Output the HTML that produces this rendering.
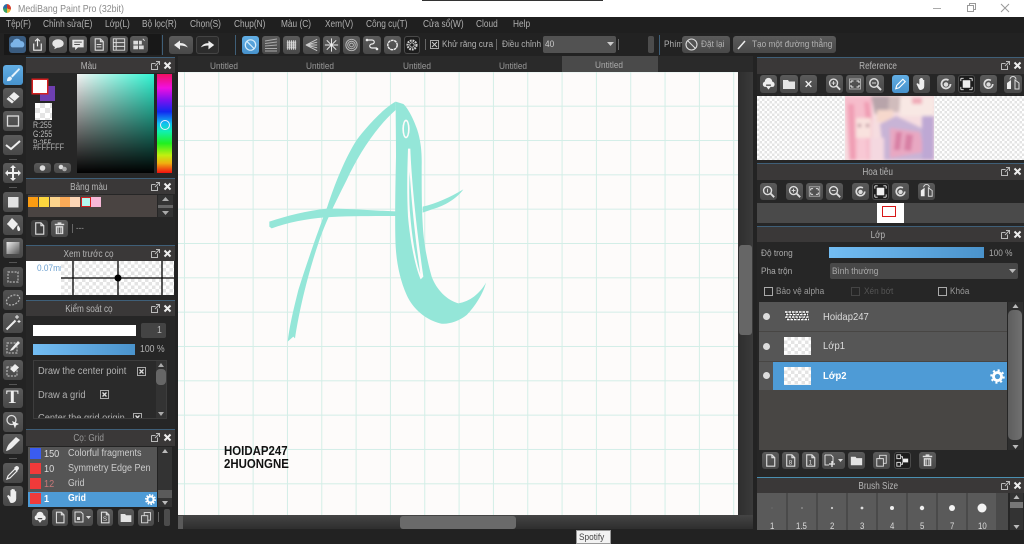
<!DOCTYPE html>
<html><head><meta charset="utf-8"><style>
*{box-sizing:border-box}
html,body{margin:0;padding:0;width:1024px;height:544px;overflow:hidden;background:#232323}
body{font-family:"Liberation Sans","Noto Sans CJK SC",sans-serif;position:relative;font-size:10px;color:#b0b0b0;filter:blur(.3px)}
.a,.t,.b,.p,.l{position:absolute}
.t{white-space:nowrap;line-height:12px;transform:scaleX(.87);transform-origin:0 0}
.b{background:linear-gradient(#5a5a5a,#484848);border-radius:3px}
.b svg{position:absolute;left:0;top:0;width:100%;height:100%}
.k{background:#1c1c1c;box-shadow:inset 0 0 0 1px #4a4a4a}
.on{background:linear-gradient(#62aee4,#4792cc)}
.l{background:#3f5f78;height:1px}
.p{background:#3a3838;text-align:center;line-height:17px;color:#b5b5b5;font-size:10px}
.p span{display:inline-block;transform:scaleX(.82)}
.r{padding-right:25px}
.c{background:repeating-conic-gradient(#e4e4e4 0 25%,#fff 0 50%) 0 0/7px 7px}
.m{top:19px;transform:scaleX(.83)}
.sw{position:absolute;top:197px;width:10px;height:10px}
</style></head><body>
<svg width="0" height="0" style="position:absolute"><defs>
<symbol id="page" viewBox="0 0 18 18"><path d="M5 3h5.500l3 3v9H5zM10.500 3v3h3" fill="none" stroke="#ddd" stroke-width="1.200"/></symbol>
<symbol id="trash" viewBox="0 0 18 18"><path d="M4 4h10v1.500H4zM7 2.500h4V4H7zM5 6.500h8V15H5z" fill="#ddd"/><path d="M7.300 8v6M9 8v6M10.700 8v6" stroke="#555"/></symbol>
<symbol id="folder" viewBox="0 0 18 18"><path d="M3 5h5l1 1.500h6V14H3z" fill="#e4e4e4"/></symbol>
<symbol id="cloud" viewBox="0 0 18 18"><path d="M3 9.500a3 3 0 0 1 2-3 4 4 0 0 1 8 0 3 3 0 0 1 1 5.500h-2.500V9.500h-5V12H5a3 3 0 0 1-2-2.500zM9 15l-3-4h6z" fill="#eee"/></symbol>
<symbol id="zin" viewBox="0 0 18 18"><circle cx="8" cy="8" r="4.200" fill="none" stroke="#ddd" stroke-width="1.500"/><path d="M11 11l4 4" stroke="#ddd" stroke-width="2"/><path d="M6 8h4M8 6v4" stroke="#ddd"/></symbol>
<symbol id="zout" viewBox="0 0 18 18"><circle cx="8" cy="8" r="4.200" fill="none" stroke="#ddd" stroke-width="1.500"/><path d="M11 11l4 4" stroke="#ddd" stroke-width="2"/><path d="M6 8h4" stroke="#ddd"/></symbol>
<symbol id="z1" viewBox="0 0 18 18"><circle cx="8" cy="8" r="4.200" fill="none" stroke="#ddd" stroke-width="1.500"/><path d="M11 11l4 4" stroke="#ddd" stroke-width="2"/><path d="M8 6v4" stroke="#ddd"/></symbol>
<symbol id="fit" viewBox="0 0 18 18"><rect x="3.500" y="4" width="11" height="10" fill="none" stroke="#aaa"/><path d="M5 6h2.500M5 6v2M13 6h-2.500M13 6v2M5 12h2.500M5 12v-2M13 12h-2.500M13 12v-2" stroke="#eee"/></symbol>
<symbol id="pen" viewBox="0 0 18 18"><path d="M4 14l1-3.500 6.500-6.500 2.500 2.500L7.500 13z" fill="none" stroke="#fff" stroke-width="1.200"/></symbol>
<symbol id="hand" viewBox="0 0 18 18"><path d="M4 9l1-.500 2 2V4h1v4.500-5.500h1.200v5.500V3.500h1.200V9V5h1.200v6.500c0 2-1.500 3.500-3.500 3.500S6.500 14 5.500 12z" fill="#eee" stroke="#eee" stroke-width=".6"/></symbol>
<symbol id="rl" viewBox="0 0 18 18"><path d="M13.500 9a4.500 4.500 0 1 1-2-3.800" fill="none" stroke="#ddd" stroke-width="1.800"/><circle cx="9" cy="9.500" r="2.300" fill="#ddd"/></symbol>
<symbol id="ctr" viewBox="0 0 18 18"><path d="M5 5h8v8H5z" fill="#eee"/><path d="M3 3h3M3 3v3M15 3h-3M15 3v3M3 15h3M3 15v-3M15 15h-3M15 15v-3" stroke="#eee"/></symbol>
<symbol id="flip" viewBox="0 0 18 18"><path d="M3 8l4-3v9H3z" fill="#eee"/><path d="M11 5l4 3v6h-4zM6 4.500a3 3 0 0 1 6 0" fill="none" stroke="#ddd"/></symbol>
<symbol id="hd" viewBox="0 0 24 11"><path d="M1.500 3.500h4M1.500 3.500v6h6v-4M5 6l4-4M6 1.500h3.500V5" fill="none" stroke="#bbb"/><path d="M14.500 2.500l6 6M20.500 2.500l-6 6" stroke="#eee" stroke-width="2"/></symbol>
</defs></svg>

<!-- title bar -->
<div class="a" style="left:0;top:0;width:1024px;height:17px;background:#fff"></div>
<div class="a" style="left:422px;top:0;width:181px;height:1px;background:#333"></div>
<div class="a" style="left:3px;top:4px;width:8px;height:9px;border-radius:50%;background:conic-gradient(#d23c2c 0 30%,#e8b83c 0 50%,#38a060 0 75%,#2c6ea8 0)"></div>
<div class="t" style="left:18px;top:3px;color:#8a8a8a;font-size:10.500px;transform:scaleX(.84)">MediBang Paint Pro (32bit)</div>
<svg class="a" style="left:930px;top:1px" width="90" height="13"><path d="M3 7.500h8" stroke="#aaa"/><path d="M37.500 4.500h6v6h-6zM39.500 4.500v-2h6v6h-2" fill="none" stroke="#999"/><path d="M71 3l8 8M79 3l-8 8" stroke="#999"/></svg>

<!-- menu -->
<div class="a" style="left:0;top:17px;width:1024px;height:16px;background:#1f1f1f"></div>
<div class="t m" style="left:6px">Tệp(F)</div><div class="t m" style="left:43px">Chỉnh sửa(E)</div><div class="t m" style="left:105px">Lớp(L)</div><div class="t m" style="left:142px">Bộ lọc(R)</div><div class="t m" style="left:190px">Chọn(S)</div><div class="t m" style="left:234px">Chụp(N)</div><div class="t m" style="left:281px">Màu (C)</div><div class="t m" style="left:325px">Xem(V)</div><div class="t m" style="left:366px">Công cụ(T)</div><div class="t m" style="left:423px">Cửa sổ(W)</div><div class="t m" style="left:476px">Cloud</div><div class="t m" style="left:513px">Help</div>

<!-- toolbar -->
<div class="a" style="left:0;top:33px;width:1024px;height:23px;background:#222"></div>
<div class="a" style="left:4px;top:34px;width:157px;height:21px;background:#181818"></div>
<div class="a" style="left:162px;top:35px;width:1px;height:20px;background:#3f5f78"></div>
<div class="a" style="left:235px;top:35px;width:1px;height:20px;background:#3f5f78"></div>
<div class="a" style="left:659px;top:35px;width:1px;height:20px;background:#3f5f78"></div>
<div class="b" style="left:9px;top:36px;width:17px;height:17px;background:#3a5c80"><svg viewBox="0 0 18 18"><path d="M3 12a3 3 0 0 1 1-5.500 4.500 4.500 0 0 1 8.500-1A3.500 3.500 0 0 1 14.500 12z" fill="#7cb4e8"/></svg></div>
<div class="b" style="left:29px;top:36px;width:17px;height:17px"><svg viewBox="0 0 18 18"><path d="M5 8v7h8V8M9 11V3M6.500 5.500L9 3l2.500 2.500" fill="none" stroke="#eee" stroke-width="1.200"/></svg></div>
<div class="b" style="left:49px;top:36px;width:18px;height:17px"><svg viewBox="0 0 18 18"><ellipse cx="9" cy="8" rx="6" ry="4.500" fill="#e8e8e8"/><path d="M6 11l-1 3 4-2z" fill="#e8e8e8"/></svg></div>
<div class="b" style="left:69px;top:36px;width:18px;height:17px"><svg viewBox="0 0 18 18"><path d="M3 4h12v8H9l-3 3v-3H3z" fill="#e8e8e8"/><path d="M5 6.500h8M5 9h6" stroke="#555"/></svg></div>
<div class="b" style="left:90px;top:36px;width:18px;height:17px"><svg viewBox="0 0 18 18"><use href="#page"/><path d="M6.500 9h5M6.500 11.500h5" stroke="#ddd"/></svg></div>
<div class="b" style="left:110px;top:36px;width:18px;height:17px"><svg viewBox="0 0 18 18"><path d="M3 3h12v12H3zM3 7h12M3 11h12M6 3v12" fill="none" stroke="#ddd"/></svg></div>
<div class="b" style="left:130px;top:36px;width:18px;height:17px"><svg viewBox="0 0 18 18"><path d="M3 5h5v4H3zM9 5h3v4H9zM3 10h5v4H3zM9 10h5v4H9z" fill="#ddd"/><path d="M13 3l2 2" stroke="#ddd"/></svg></div>
<div class="b" style="left:169px;top:36px;width:24px;height:18px"><svg viewBox="0 0 24 18"><path d="M5 9l6-4.500v2.500c4 0 6 1.500 8 4.500-3-1.500-5-2-8-2v4z" fill="#eee"/></svg></div>
<div class="b" style="left:196px;top:36px;width:23px;height:18px;background:#2c2c2c;box-shadow:inset 0 0 0 1px #444"><svg viewBox="0 0 24 18"><path d="M19 9l-6-4.500v2.500c-4 0-6 1.500-8 4.500 3-1.500 5-2 8-2v4z" fill="#eee"/></svg></div>
<div class="b on" style="left:242px;top:36px;width:17px;height:18px"><svg viewBox="0 0 18 18"><circle cx="9" cy="9" r="5.500" fill="none" stroke="#d6ecfa" stroke-width="1.300"/><path d="M5 5l8 8" stroke="#d6ecfa" stroke-width="1.300"/></svg></div>
<div class="b" style="left:262px;top:36px;width:18px;height:18px"><svg viewBox="0 0 18 18"><path d="M3 5l12-2M3 7.500l12-1.500M3 10l12-1M3 12.500h12M3 15l12 0" stroke="#aaa"/></svg></div>
<div class="b" style="left:283px;top:36px;width:17px;height:18px"><svg viewBox="0 0 18 18"><path d="M5 4v10M7 4v10M9 4v10M11 4v10M13 4v10M4 6h10M4 8h10M4 10h10M4 12h10" stroke="#ddd"/></svg></div>
<div class="b" style="left:303px;top:36px;width:17px;height:18px"><svg viewBox="0 0 18 18"><path d="M3 9l12-6M3 9l12-3M3 9h12M3 9l12 3M3 9l12 6" stroke="#ccc"/></svg></div>
<div class="b" style="left:323px;top:36px;width:17px;height:18px"><svg viewBox="0 0 18 18"><path d="M9 2v14M2 9h14M4 4l10 10M14 4L4 14" stroke="#eee"/></svg></div>
<div class="b" style="left:343px;top:36px;width:17px;height:18px"><svg viewBox="0 0 18 18"><circle cx="9" cy="9" r="6" fill="none" stroke="#bbb"/><circle cx="9" cy="9" r="4" fill="none" stroke="#bbb"/><circle cx="9" cy="9" r="2" fill="none" stroke="#bbb"/></svg></div>
<div class="b" style="left:363px;top:36px;width:18px;height:18px"><svg viewBox="0 0 18 18"><path d="M4 4h5c3 0 3 4 0 4S6 12 9 12h5" fill="none" stroke="#eee" stroke-width="1.200"/><circle cx="4" cy="4" r="1.300" fill="#eee"/><circle cx="14" cy="13" r="1.300" fill="#eee"/></svg></div>
<div class="b" style="left:384px;top:36px;width:17px;height:18px"><svg viewBox="0 0 18 18"><circle cx="9" cy="9" r="5" fill="none" stroke="#eee" stroke-width="1.500" stroke-dasharray="3 .6"/></svg></div>
<div class="b k" style="left:404px;top:36px;width:16px;height:18px"><svg viewBox="0 0 18 18"><circle cx="9" cy="9" r="5" fill="none" stroke="#ccc" stroke-width="2.500" stroke-dasharray="2 1"/><circle cx="9" cy="9" r="2.500" fill="none" stroke="#ccc"/></svg></div>
<div class="a" style="left:425px;top:39px;width:1px;height:11px;background:#666"></div>
<div class="a" style="left:430px;top:40px;width:9px;height:9px;border:1px solid #aaa;color:#ccc"><svg width="7" height="7" style="position:absolute;left:0;top:0"><path d="M1 1l5 5M6 1L1 6" stroke="#ccc"/></svg></div>
<div class="t" style="left:442px;top:39px;font-size:9.500px">Khử răng cưa</div>
<div class="a" style="left:496px;top:39px;width:1px;height:11px;background:#666"></div>
<div class="t" style="left:502px;top:39px;font-size:9.500px">Điều chỉnh</div>
<div class="a" style="left:543px;top:36px;width:73px;height:17px;background:#525252;border-radius:2px"></div>
<div class="t" style="left:545px;top:39px;font-size:9.500px;color:#ccc">40</div>
<svg class="a" style="left:607px;top:42px" width="7" height="5"><path d="M0 0h7L3.500 4z" fill="#ccc"/></svg>
<div class="a" style="left:618px;top:39px;width:1px;height:11px;background:#666"></div>
<div class="a" style="left:648px;top:36px;width:6px;height:17px;background:#4c4c4c;border-radius:2px"></div>
<div class="t" style="left:664px;top:39px;font-size:9.500px">Phím</div>
<div class="b" style="left:682px;top:36px;width:48px;height:17px"><svg style="width:17px" viewBox="0 0 17 17"><circle cx="9.500" cy="8.500" r="5.500" fill="none" stroke="#ddd" stroke-width="1.100"/><path d="M5.500 4.500l8 8" stroke="#ddd" stroke-width="1.100"/></svg></div>
<div class="t" style="left:701px;top:39px;font-size:9.500px">Đặt lại</div>
<div class="b" style="left:733px;top:36px;width:103px;height:17px"><svg style="width:17px" viewBox="0 0 17 17"><path d="M5 13L12 5" stroke="#eee" stroke-width="1.500"/></svg></div>
<div class="t" style="left:752px;top:39px;font-size:9.500px">Tạo một đường thẳng</div>

<!-- tool column -->
<div class="a" style="left:0;top:56px;width:26px;height:474px;background:#232323"></div>
<div class="b on" style="left:3px;top:65px;width:20px;height:20px"><svg viewBox="0 0 20 20"><path d="M16 3L8 11l1.500 1.500L17 4.500zM4 16c0-3 1.500-4.500 3.500-4.500l1.500 1.500C9 15 7 16.500 4 16z" fill="#e8f4fc"/></svg></div>
<div class="b" style="left:3px;top:88px;width:20px;height:20px"><svg viewBox="0 0 20 20"><path d="M3.500 11L11 4l5.500 4.500L9 15.500z" fill="#eee"/><path d="M6 9l5.500 4.500" stroke="#666"/></svg></div>
<div class="b" style="left:3px;top:111px;width:20px;height:20px"><svg viewBox="0 0 20 20"><rect x="4.500" y="5" width="11" height="10" fill="none" stroke="#ddd" stroke-width="1.300"/></svg></div>
<div class="b" style="left:3px;top:135px;width:20px;height:20px"><svg viewBox="0 0 20 20"><path d="M3 10l5 4 9-8" fill="none" stroke="#eee" stroke-width="2"/></svg></div>
<div class="a" style="left:9px;top:159px;width:8px;height:1px;background:#555"></div>
<div class="b" style="left:3px;top:163px;width:20px;height:20px"><svg viewBox="0 0 20 20"><path d="M10 2l3 3h-2v4h4V7l3 3-3 3v-2h-4v4h2l-3 3-3-3h2v-4H5v2l-3-3 3-3v2h4V5H7z" fill="#eee"/></svg></div>
<div class="a" style="left:9px;top:187px;width:8px;height:1px;background:#555"></div>
<div class="b" style="left:3px;top:192px;width:20px;height:20px"><svg viewBox="0 0 20 20"><rect x="5" y="5" width="10.500" height="10.500" fill="#e2e2e2"/></svg></div>
<div class="b" style="left:3px;top:215px;width:20px;height:20px"><svg viewBox="0 0 20 20"><path d="M9 3l6 6-5 6-6-6z" fill="#eee"/><path d="M15 11c2 2 2 4 1 4.500s-2-2-1-4.500zM4 9h9" stroke="#eee" fill="#eee"/></svg></div>
<div class="b" style="left:3px;top:238px;width:20px;height:20px"><svg viewBox="0 0 20 20"><defs><linearGradient id="gr" x1="0" y1="0" x2="1" y2="1"><stop offset="0" stop-color="#eee"/><stop offset="1" stop-color="#555"/></linearGradient></defs><rect x="3.500" y="4" width="13" height="12" fill="url(#gr)"/></svg></div>
<div class="a" style="left:9px;top:262px;width:8px;height:1px;background:#555"></div>
<div class="b" style="left:3px;top:267px;width:20px;height:20px;opacity:.85"><svg viewBox="0 0 20 20"><rect x="5" y="5" width="10" height="10" fill="none" stroke="#ccc" stroke-width="1.200" stroke-dasharray="2 1.300"/></svg></div>
<div class="b" style="left:3px;top:290px;width:20px;height:20px;opacity:.85"><svg viewBox="0 0 20 20"><ellipse cx="10" cy="10" rx="7" ry="4.500" transform="rotate(-25 10 10)" fill="none" stroke="#ccc" stroke-width="1.200" stroke-dasharray="2 1.300"/></svg></div>
<div class="b" style="left:3px;top:313px;width:20px;height:20px"><svg viewBox="0 0 20 20"><path d="M3.500 16.500l9-9" stroke="#eee" stroke-width="2"/><path d="M14 2v4M12 4h4M16 7v3M14.500 8.500h3" stroke="#eee"/></svg></div>
<div class="b" style="left:3px;top:337px;width:20px;height:20px"><svg viewBox="0 0 20 20"><rect x="4" y="6" width="10" height="10" fill="none" stroke="#ccc" stroke-dasharray="2 1.300"/><path d="M8 12l7-8 2 2-7 7-3 1z" fill="#eee"/></svg></div>
<div class="b" style="left:3px;top:360px;width:20px;height:20px"><svg viewBox="0 0 20 20"><rect x="4" y="7" width="10" height="9" fill="none" stroke="#ccc" stroke-dasharray="2 1.300"/><path d="M7 9l5-5 4 3.500-5 5z" fill="#eee"/></svg></div>
<div class="a" style="left:9px;top:384px;width:8px;height:1px;background:#555"></div>
<div class="b" style="left:3px;top:388px;width:20px;height:20px"><span class="a" style="left:3px;top:0;font:bold 19px/20px 'Liberation Serif',serif;color:#eee">T</span></div>
<div class="b" style="left:3px;top:412px;width:20px;height:20px"><svg viewBox="0 0 20 20"><circle cx="8.500" cy="8" r="4.500" fill="none" stroke="#ddd" stroke-width="1.300"/><path d="M9 9l7 3-3 1.500-1 3z" fill="#eee"/></svg></div>
<div class="b" style="left:3px;top:434px;width:20px;height:20px"><svg viewBox="0 0 20 20"><path d="M3 17c1-4 2-6 4-8l6-6 4 3-6 6c-2 2-4 4-8 5z" fill="#eee"/></svg></div>
<div class="a" style="left:9px;top:458px;width:8px;height:1px;background:#555"></div>
<div class="b" style="left:3px;top:463px;width:20px;height:20px"><svg viewBox="0 0 20 20"><path d="M4 16l1-3 7-7 2 2-7 7z" fill="none" stroke="#eee" stroke-width="1.200"/><path d="M11 5l1.500-1.500c2-1.500 4.500 1 3 3L14 8z" fill="#eee"/></svg></div>
<div class="b" style="left:3px;top:486px;width:20px;height:20px"><svg viewBox="0 0 18 18"><use href="#hand"/></svg></div>

<!-- colour panel -->
<div class="a" style="left:26px;top:57px;width:149px;height:373px;background:#262626"></div>
<div class="l" style="left:26px;top:57px;width:149px"></div>
<div class="p" style="left:26px;top:58px;width:149px;height:15px;padding-right:24px"><span>Màu</span></div>
<svg class="a" style="left:150px;top:60px" width="24" height="11"><use href="#hd"/></svg>
<div class="a" style="left:40px;top:86px;width:15px;height:15px;background:#6e3fb0"></div>
<div class="a" style="left:32px;top:79px;width:16px;height:15px;background:#fff;border:1px solid #d42020;box-shadow:0 0 0 .5px #d42020"></div>
<div class="a c" style="left:35px;top:103px;width:17px;height:17px;background-size:10px 10px"></div>
<div class="t" style="left:33px;top:121px;font-size:9px;color:#bbb;line-height:9px;transform:scaleX(.78)">R:255<br>G:255</div>
<div class="a" style="left:33px;top:139px;width:40px;height:3.500px;overflow:hidden"><div class="t" style="top:0;left:0;font-size:9px;line-height:9px;color:#bbb;transform:scaleX(.78)">B:255</div></div>
<div class="t" style="left:33px;top:143px;font-size:9px;line-height:9px;transform:scaleX(.82)">#FFFFFF</div>
<div class="b" style="left:34px;top:163px;width:17px;height:10px"><svg viewBox="0 0 17 10"><circle cx="8.500" cy="5" r="2.800" fill="#ddd"/></svg></div>
<div class="b" style="left:54px;top:163px;width:17px;height:10px"><svg viewBox="0 0 17 10"><circle cx="7" cy="4" r="2.300" fill="#ddd"/><circle cx="10.500" cy="6" r="2.300" fill="#aaa"/></svg></div>
<div class="a" style="left:77px;top:74px;width:77px;height:99px;background:linear-gradient(to top,#000,rgba(0,0,0,0)),linear-gradient(to right,#f4f4f4,#30f5d2)"></div>
<div class="a" style="left:157px;top:74px;width:15px;height:99px;background:linear-gradient(#f01060 0,#f010e0 14%,#8010f0 26%,#1028f0 38%,#10c0f0 50%,#10f0b0 58%,#20f020 70%,#c0f010 82%,#f0b010 90%,#f01010 100%)"></div>
<div class="a" style="left:160px;top:120px;width:10px;height:10px;border:1.500px solid #eef;border-radius:50%"></div>

<!-- palette -->
<div class="l" style="left:26px;top:178px;width:149px"></div>
<div class="p" style="left:26px;top:179px;width:149px;height:15px;padding-right:24px"><span>Bảng màu</span></div>
<svg class="a" style="left:150px;top:181px" width="24" height="11"><use href="#hd"/></svg>
<div class="a" style="left:28px;top:195px;width:129px;height:22px;background:#4a4442"></div>
<div class="sw" style="left:28px;background:#fb9c12"></div><div class="sw" style="left:39px;background:#fcd63e"></div><div class="sw" style="left:50px;background:#fcd48c"></div><div class="sw" style="left:60px;background:#fbab58"></div><div class="sw" style="left:70px;background:#fdd6b6"></div>
<div class="sw" style="left:81px;background:#b4f7ee;border:1px solid #d42020"></div><div class="sw" style="left:91px;background:#f7b8d8"></div>
<div class="a" style="left:158px;top:195px;width:15px;height:22px;background:#333"></div>
<svg class="a" style="left:158px;top:197px" width="15" height="20"><path d="M7.500 0l3.500 4H4z" fill="#aaa"/><path d="M0 8h15v3H0z" fill="#666"/><path d="M7.500 18l3.500-4H4z" fill="#aaa"/></svg>
<div class="b" style="left:31px;top:220px;width:17px;height:17px;background:#3e3e3e"><svg viewBox="0 0 18 18"><use href="#page"/></svg></div>
<div class="b" style="left:51px;top:220px;width:17px;height:17px"><svg viewBox="0 0 18 18"><use href="#trash"/></svg></div>
<div class="a" style="left:72px;top:224px;width:1px;height:9px;background:#666"></div>
<div class="t" style="left:76px;top:222px;font-size:9px;color:#999">---</div>

<!-- preview -->
<div class="l" style="left:26px;top:245px;width:149px"></div>
<div class="p" style="left:26px;top:246px;width:149px;height:15px;padding-right:24px"><span>Xem trước cọ</span></div>
<svg class="a" style="left:150px;top:248px" width="24" height="11"><use href="#hd"/></svg>
<div class="a c" style="left:61px;top:261px;width:113px;height:34px"></div>
<div class="a" style="left:26px;top:261px;width:35px;height:34px;background:#fff;overflow:hidden"><div class="t" style="left:11px;top:2px;color:#6a9fd0;font-size:9.500px">0.07mm</div></div>
<svg class="a" style="left:61px;top:261px" width="113" height="34"><path d="M12 0v34M57 0v34M101 0v34M0 17h113" stroke="#000" stroke-width="1.300"/><circle cx="57" cy="17" r="3.500" fill="#000"/></svg>

<!-- brush control -->
<div class="l" style="left:26px;top:300px;width:149px"></div>
<div class="p" style="left:26px;top:301px;width:149px;height:15px;padding-right:24px"><span>Kiểm soát cọ</span></div>
<svg class="a" style="left:150px;top:303px" width="24" height="11"><use href="#hd"/></svg>
<div class="a" style="left:33px;top:325px;width:103px;height:11px;background:#fff"></div>
<div class="a" style="left:141px;top:323px;width:25px;height:15px;background:#444;border-radius:2px"></div>
<div class="t" style="left:157px;top:325px;color:#bbb;font-size:10px">1</div>
<div class="a" style="left:33px;top:344px;width:102px;height:11px;background:linear-gradient(to right,#73bdf3,#4a93cc)"></div>
<div class="t" style="left:140px;top:344px;font-size:10px">100 %</div>
<div class="a" style="left:33px;top:360px;width:134px;height:59px;background:#2a2a2a;border:1px solid #3d3d3d;overflow:hidden">
<div class="t" style="left:4px;top:5px;font-size:10px;transform:scaleX(.93)">Draw the center point</div>
<div class="t" style="left:4px;top:29px;font-size:10px;transform:scaleX(.93)">Draw a grid</div>
<div class="t" style="left:4px;top:52px;font-size:10px;transform:scaleX(.93)">Center the grid origin</div>
<svg class="a" style="left:103px;top:6px" width="9" height="9"><path d="M.5.500h8v8h-8z" fill="none" stroke="#aaa"/><path d="M2.500 2.500l4 4M6.500 2.500l-4 4" stroke="#ddd" stroke-width="1.300"/></svg>
<svg class="a" style="left:66px;top:29px" width="9" height="9"><path d="M.5.500h8v8h-8z" fill="none" stroke="#aaa"/><path d="M2.500 2.500l4 4M6.500 2.500l-4 4" stroke="#ddd" stroke-width="1.300"/></svg>
<svg class="a" style="left:99px;top:52px" width="9" height="9"><path d="M.5.500h8v8h-8z" fill="none" stroke="#aaa"/><path d="M2.500 2.500l4 4M6.500 2.500l-4 4" stroke="#ddd" stroke-width="1.300"/></svg>
</div>
<div class="a" style="left:156px;top:361px;width:10px;height:57px;background:#333"></div>
<div class="a" style="left:156px;top:369px;width:10px;height:16px;background:#666;border-radius:4px"></div>
<svg class="a" style="left:156px;top:362px" width="10" height="55"><path d="M5 1l3 4H2zM5 54l3-4H2z" fill="#aaa"/></svg>

<!-- brush list -->
<div class="l" style="left:26px;top:429px;width:149px"></div>
<div class="p" style="left:26px;top:430px;width:149px;height:16px;padding-right:24px;color:#999"><span>Cọ: Grid</span></div>
<svg class="a" style="left:150px;top:432px" width="24" height="11"><use href="#hd"/></svg>
<div class="a" style="left:28px;top:447px;width:129px;height:14.500px;background:#555"></div>
<div class="a" style="left:28px;top:462px;width:129px;height:14.500px;background:#555"></div>
<div class="a" style="left:28px;top:477px;width:129px;height:14.500px;background:#555"></div>
<div class="a" style="left:28px;top:492px;width:129px;height:14.500px;background:#4e9bd6"></div>
<div class="a" style="left:30px;top:448px;width:11px;height:11px;background:#3a5cf0"></div>
<div class="a" style="left:30px;top:463px;width:11px;height:11px;background:#f03a3a"></div>
<div class="a" style="left:30px;top:478px;width:11px;height:11px;background:#f03a3a"></div>
<div class="a" style="left:30px;top:493px;width:11px;height:11px;background:#f03a3a"></div>
<div class="t" style="left:44px;top:448px;font-size:10.500px;color:#ddd">150</div><div class="t" style="left:68px;top:448px;font-size:10px;color:#ccc;transform:scaleX(.9)">Colorful fragments</div>
<div class="t" style="left:44px;top:463px;font-size:10.500px;color:#ddd">10</div><div class="t" style="left:68px;top:463px;font-size:10px;color:#ccc;transform:scaleX(.9)">Symmetry Edge Pen</div>
<div class="t" style="left:44px;top:478px;font-size:10.500px;color:#c87878">12</div><div class="t" style="left:68px;top:478px;font-size:10px;color:#ccc">Grid</div>
<div class="t" style="left:44px;top:493px;font-size:10.500px;color:#fff;font-weight:bold">1</div><div class="t" style="left:68px;top:493px;font-size:10px;color:#fff;font-weight:bold">Grid</div>
<svg class="a" style="left:145px;top:494px" width="11" height="11"><circle cx="5.500" cy="5.500" r="3" fill="none" stroke="#fff" stroke-width="2"/><circle cx="5.500" cy="5.500" r="4.500" fill="none" stroke="#fff" stroke-width="2" stroke-dasharray="1.500 1.300"/></svg>
<div class="a" style="left:158px;top:447px;width:14px;height:60px;background:#333"></div>
<div class="a" style="left:158px;top:490px;width:14px;height:8px;background:#5a5a5a"></div>
<svg class="a" style="left:158px;top:448px" width="14" height="58"><path d="M7 1l3 4H4zM7 57l3-4H4z" fill="#bbb"/></svg>
<div class="b" style="left:32px;top:509px;width:16px;height:17px"><svg viewBox="0 0 18 18"><use href="#cloud"/></svg></div>
<div class="b" style="left:52px;top:509px;width:16px;height:17px"><svg viewBox="0 0 18 18"><use href="#page"/></svg></div>
<div class="b" style="left:72px;top:509px;width:21px;height:17px"><svg viewBox="0 0 21 17" ><path d="M3 3h6l2 2v8H3z" fill="none" stroke="#ddd"/><path d="M5 8h3v3H5z" fill="#ddd"/><path d="M14 7h5l-2.500 3z" fill="#ddd"/></svg></div>
<div class="b" style="left:97px;top:509px;width:16px;height:17px"><svg viewBox="0 0 18 18"><use href="#page"/><text x="9" y="13" font-size="7" text-anchor="middle" fill="#ddd" font-family="Liberation Sans">S</text></svg></div>
<div class="b" style="left:118px;top:509px;width:16px;height:17px"><svg viewBox="0 0 18 18"><use href="#folder"/></svg></div>
<div class="b" style="left:138px;top:509px;width:16px;height:17px"><svg viewBox="0 0 18 18"><path d="M4 7h7v8H4zM7 7V3.500h7V12h-3" fill="none" stroke="#ddd"/></svg></div>
<div class="a" style="left:158px;top:512px;width:1px;height:10px;background:#666"></div>
<div class="a" style="left:164px;top:509px;width:6px;height:17px;background:#4c4c4c;border-radius:2px"></div>

<!-- tabs -->
<div class="a" style="left:178px;top:56px;width:575px;height:16px;background:#2a2a2a"></div>
<div class="a" style="left:562px;top:56px;width:96px;height:16px;background:#4a4a4a"></div>
<div class="t" style="left:210px;top:61px;font-size:9.500px;color:#999">Untitled</div>
<div class="t" style="left:306px;top:61px;font-size:9.500px;color:#999">Untitled</div>
<div class="t" style="left:403px;top:61px;font-size:9.500px;color:#999">Untitled</div>
<div class="t" style="left:499px;top:61px;font-size:9.500px;color:#999">Untitled</div>
<div class="t" style="left:595px;top:60px;font-size:9.500px;color:#aaa">Untitled</div>

<!-- canvas -->
<div class="a" style="left:178px;top:72px;width:560px;height:443px;background-color:#fdfbfa;background-image:linear-gradient(to right,#d3eee7 1px,transparent 1px),linear-gradient(to bottom,#d3eee7 1px,transparent 1px);background-size:34.330px 34.330px;background-position:40.300px 33.700px"></div>
<svg class="a" style="left:250px;top:90px" width="260" height="260" viewBox="0 0 780 780">
<g fill="#94e6d8">
<path d="M437 35C400 55 350 110 320 150C285 205 255 280 232 350C205 420 170 520 145 600C130 660 118 710 113 755L130 740L135 745C145 680 165 580 205 460C225 400 250 350 290 270C325 195 375 115 437 60Z"/>
<path d="M437 35L460 42C475 55 495 95 505 130C513 160 516 190 515 230C515 290 515 350 518 400C520 445 528 500 545 560C560 600 590 630 625 640C660 635 690 610 708 578C700 610 675 650 650 675C625 695 590 705 570 700C530 690 490 660 470 615C450 570 440 520 437 470C434 400 436 300 438 200C438 150 437 100 437 35Z"/>
<path d="M58 395C110 378 170 362 232 356C290 355 370 362 437 364L437 378C370 378 290 378 225 382C170 386 110 398 65 415L58 410Z"/>
<path d="M518 350C560 340 600 322 640 298C625 320 590 345 555 355L518 368Z"/>
</g>
<ellipse cx="468" cy="117" rx="11" ry="28" fill="#fdfbfa"/>
<ellipse cx="468" cy="117" rx="6" ry="23" fill="#94e6d8"/>
<path d="M474 176L481 176C484 260 497 400 520 560L512 568C495 530 480 450 474 380C470 300 472 240 474 176Z" fill="#fdfbfa"/>
<path d="M479 245C483 320 495 440 511 552C497 510 486 440 481 380C477 340 477 290 479 245Z" fill="#94e6d8"/>
</svg>
<div class="t" style="left:224px;top:444px;color:#111;font-weight:bold;font-size:13px;line-height:13px;transform:scaleX(.88)">HOIDAP247<br>2HUONGNE</div>

<!-- canvas scrollbars -->
<div class="a" style="left:738px;top:72px;width:15px;height:443px;background:linear-gradient(to right,#2e2e2e,#3a3a3a)"></div>
<div class="a" style="left:739px;top:245px;width:13px;height:90px;background:#666;border-radius:3px"></div>
<div class="a" style="left:178px;top:515px;width:575px;height:14px;background:linear-gradient(#444,#2e2e2e)"></div>
<div class="a" style="left:400px;top:516px;width:116px;height:13px;background:#6a6a6a;border-radius:3px"></div>
<div class="a" style="left:178px;top:516px;width:5px;height:13px;background:#5a5a5a"></div>

<!-- right: reference -->
<div class="a" style="left:757px;top:57px;width:267px;height:473px;background:#262626"></div>
<div class="l" style="left:757px;top:57px;width:267px"></div>
<div class="p r" style="left:757px;top:58px;width:267px;height:16px"><span>Reference</span></div>
<svg class="a" style="left:1000px;top:60px" width="24" height="11"><use href="#hd"/></svg>
<div class="b" style="left:760px;top:75px;width:17px;height:18px"><svg viewBox="0 0 18 18"><use href="#cloud"/></svg></div>
<div class="b" style="left:780px;top:75px;width:18px;height:18px"><svg viewBox="0 0 18 18"><use href="#folder"/></svg></div>
<div class="b" style="left:800px;top:75px;width:17px;height:18px"><svg viewBox="0 0 18 18"><path d="M6 6l6 6M12 6l-6 6" stroke="#eee" stroke-width="1.500"/></svg></div>
<div class="b" style="left:826px;top:75px;width:17px;height:18px"><svg viewBox="0 0 18 18"><use href="#zin"/></svg></div>
<div class="b" style="left:846px;top:75px;width:18px;height:18px"><svg viewBox="0 0 18 18"><use href="#fit"/></svg></div>
<div class="b" style="left:866px;top:75px;width:18px;height:18px"><svg viewBox="0 0 18 18"><use href="#zout"/></svg></div>
<div class="b on" style="left:892px;top:75px;width:17px;height:18px"><svg viewBox="0 0 18 18"><use href="#pen"/></svg></div>
<div class="b" style="left:913px;top:75px;width:17px;height:18px"><svg viewBox="0 0 18 18"><use href="#hand"/></svg></div>
<div class="b" style="left:937px;top:75px;width:18px;height:18px"><svg viewBox="0 0 18 18"><use href="#rl"/></svg></div>
<div class="b k" style="left:958px;top:75px;width:17px;height:18px"><svg viewBox="0 0 18 18"><use href="#ctr"/></svg></div>
<div class="b" style="left:980px;top:75px;width:17px;height:18px"><svg viewBox="0 0 18 18"><use href="#rl"/></svg></div>
<div class="b" style="left:1004px;top:75px;width:18px;height:18px"><svg viewBox="0 0 18 18"><use href="#flip"/></svg></div>
<div class="a c" style="left:757px;top:96px;width:267px;height:64px;background-size:5px 5px"></div>
<svg class="a" style="left:844px;top:96px" width="91" height="64" viewBox="0 0 91 64">
<defs><filter id="bl" x="-5%" y="-5%" width="110%" height="110%"><feGaussianBlur stdDeviation="1.500"/></filter></defs>
<clipPath id="cp"><rect x="1" y="0" width="89" height="64"/></clipPath>
<g clip-path="url(#cp)">
<rect width="91" height="64" fill="#f6dde0"/>
<g filter="url(#bl)">
<path d="M0 0h28v64H5z" fill="#f6bccb"/>
<path d="M4 8l6 0 2 56H6zM20 6l5 0 3 20-6 0z" fill="#f09eb4"/>
<path d="M12 22h15v20H12z" fill="#f9e2de"/>
<path d="M14 28h3v3h-3zM22 28h3v3h-3z" fill="#b08090"/>
<path d="M27 0h18v18l-14 0z" fill="#b8a4aa"/>
<path d="M45 0h12l-2 16H44z" fill="#d0bcbc"/>
<path d="M33 14h16v12H33z" fill="#f6d8cc"/>
<path d="M56 2h34v18H56z" fill="#f8e8e4"/>
<path d="M68 2h10v6H68z" fill="#f0aab8"/>
<path d="M36 28l16-8 38 18v26H40z" fill="#c8b4d6"/>
<path d="M46 32l30 4 4 20-34 6z" fill="#e8a8c2"/>
<path d="M52 36l6 0-2 18-6 0zM62 38l7 1-2 16-7-1z" fill="#d880a4"/>
<path d="M78 20h12v44H78z" fill="#bea8d4"/>
<path d="M26 42h14v22H26z" fill="#f4d8e0"/>
<path d="M14 42h8l1 22H12z" fill="#f8c8d4"/>
</g></g></svg>

<!-- navigator -->
<div class="l" style="left:757px;top:163px;width:267px"></div>
<div class="p r" style="left:757px;top:164px;width:267px;height:16px"><span>Hoa tiêu</span></div>
<svg class="a" style="left:1000px;top:166px" width="24" height="11"><use href="#hd"/></svg>
<div class="b" style="left:760px;top:183px;width:17px;height:17px"><svg viewBox="0 0 18 18"><use href="#z1"/></svg></div>
<div class="b" style="left:786px;top:183px;width:17px;height:17px"><svg viewBox="0 0 18 18"><use href="#zin"/></svg></div>
<div class="b" style="left:806px;top:183px;width:17px;height:17px"><svg viewBox="0 0 18 18"><use href="#fit"/></svg></div>
<div class="b" style="left:826px;top:183px;width:17px;height:17px"><svg viewBox="0 0 18 18"><use href="#zout"/></svg></div>
<div class="b" style="left:852px;top:183px;width:17px;height:17px"><svg viewBox="0 0 18 18"><use href="#rl"/></svg></div>
<div class="b k" style="left:872px;top:183px;width:17px;height:17px"><svg viewBox="0 0 18 18"><use href="#ctr"/></svg></div>
<div class="b" style="left:892px;top:183px;width:17px;height:17px"><svg viewBox="0 0 18 18"><use href="#rl"/></svg></div>
<div class="b" style="left:918px;top:183px;width:17px;height:17px"><svg viewBox="0 0 18 18"><use href="#flip"/></svg></div>
<div class="a" style="left:757px;top:203px;width:267px;height:20px;background:#4a4a4a"></div>
<div class="a" style="left:877px;top:203px;width:27px;height:20px;background:#fff"></div>
<div class="a" style="left:882px;top:206px;width:14px;height:11px;border:1.500px solid #d81818"></div>

<!-- layers -->
<div class="l" style="left:757px;top:226px;width:267px"></div>
<div class="p r" style="left:757px;top:227px;width:267px;height:15px"><span>Lớp</span></div>
<svg class="a" style="left:1000px;top:229px" width="24" height="11"><use href="#hd"/></svg>
<div class="t" style="left:761px;top:248px;font-size:9.500px;color:#aaa">Độ trong</div>
<div class="a" style="left:829px;top:247px;width:155px;height:11px;background:linear-gradient(to right,#73bdf3,#4a93cc)"></div>
<div class="t" style="left:989px;top:248px;font-size:9.500px;color:#aaa">100 %</div>
<div class="t" style="left:761px;top:266px;font-size:9.500px;color:#aaa">Pha trộn</div>
<div class="a" style="left:830px;top:263px;width:188px;height:16px;background:#484848;border-radius:2px"></div>
<div class="t" style="left:832px;top:266px;font-size:9.500px;color:#aaa">Bình thường</div>
<svg class="a" style="left:1009px;top:269px" width="7" height="5"><path d="M0 0h7L3.500 4z" fill="#bbb"/></svg>
<div class="a" style="left:764px;top:287px;width:9px;height:9px;border:1px solid #aaa"></div>
<div class="t" style="left:776px;top:286px;font-size:9.500px;color:#999">Bảo vệ alpha</div>
<div class="a" style="left:851px;top:287px;width:9px;height:9px;border:1px solid #444"></div>
<div class="t" style="left:864px;top:286px;font-size:9.500px;color:#555">Xén bớt</div>
<div class="a" style="left:938px;top:287px;width:9px;height:9px;border:1px solid #aaa"></div>
<div class="t" style="left:950px;top:286px;font-size:9.500px;color:#999">Khóa</div>
<div class="a" style="left:759px;top:302px;width:248px;height:148px;background:#484644"></div>
<div class="a" style="left:759px;top:302px;width:248px;height:29px;background:#565656"></div>
<div class="a" style="left:759px;top:332px;width:248px;height:29px;background:#565656"></div>
<div class="a" style="left:759px;top:362px;width:14px;height:28px;background:#565656"></div>
<div class="a" style="left:773px;top:362px;width:234px;height:28px;background:#4e9bd6"></div>
<div class="a" style="left:763px;top:313px;width:7px;height:7px;border-radius:50%;background:#ddd"></div>
<div class="a" style="left:763px;top:343px;width:7px;height:7px;border-radius:50%;background:#ddd"></div>
<div class="a" style="left:763px;top:372px;width:7px;height:7px;border-radius:50%;background:#ddd"></div>
<svg class="a" style="left:784px;top:309px" width="27" height="15"><path d="M1 3h24M2 5.500h22M1 8h24M3 10.500h22" stroke="#fff" stroke-width="1.500" stroke-dasharray="2.500 1"/><path d="M1 4.500h24M1 7h24M2 9.500h22" stroke="#333" stroke-dasharray="1 2"/></svg>
<div class="a c" style="left:784px;top:337px;width:27px;height:18px"></div>
<div class="a c" style="left:784px;top:367px;width:27px;height:18px"></div>
<div class="t" style="left:823px;top:311px;font-size:10.500px;color:#ddd;transform:scaleX(.9)">Hoidap247</div>
<div class="t" style="left:823px;top:340px;font-size:10.500px;color:#ddd;transform:scaleX(.9)">Lớp1</div>
<div class="t" style="left:823px;top:370px;font-size:10.500px;color:#fff;font-weight:bold;transform:scaleX(.9)">Lớp2</div>
<svg class="a" style="left:990px;top:369px" width="15" height="15"><circle cx="7.500" cy="7.500" r="4" fill="none" stroke="#fff" stroke-width="2.800"/><circle cx="7.500" cy="7.500" r="6" fill="none" stroke="#fff" stroke-width="2.500" stroke-dasharray="2 2.700"/></svg>
<div class="a" style="left:1008px;top:302px;width:15px;height:148px;background:#2e2e2e"></div>
<div class="a" style="left:1008px;top:310px;width:14px;height:130px;background:linear-gradient(to right,#5e5e5e,#707070);border-radius:5px"></div>
<svg class="a" style="left:1008px;top:302px" width="15" height="148"><path d="M7.500 2l3 4h-6zM7.500 147l3-4h-6z" fill="#bbb"/></svg>
<div class="b" style="left:762px;top:452px;width:17px;height:17px"><svg viewBox="0 0 18 18"><use href="#page"/></svg></div>
<div class="b" style="left:782px;top:452px;width:17px;height:17px"><svg viewBox="0 0 18 18"><use href="#page"/><text x="9" y="13" font-size="7" text-anchor="middle" fill="#ddd" font-family="Liberation Sans">8</text></svg></div>
<div class="b" style="left:802px;top:452px;width:17px;height:17px"><svg viewBox="0 0 18 18"><use href="#page"/><text x="9" y="13" font-size="7" text-anchor="middle" fill="#ddd" font-family="Liberation Sans">1</text></svg></div>
<div class="b" style="left:822px;top:452px;width:23px;height:17px"><svg viewBox="0 0 23 17"><path d="M3 3h6l2 2v6M3 3v10h4" fill="none" stroke="#ddd"/><path d="M10 9v6M7 12h6" stroke="#eee" stroke-width="1.300"/><path d="M16 7h5l-2.500 3z" fill="#ddd"/></svg></div>
<div class="b" style="left:848px;top:452px;width:17px;height:17px"><svg viewBox="0 0 18 18"><use href="#folder"/></svg></div>
<div class="b" style="left:873px;top:452px;width:17px;height:17px"><svg viewBox="0 0 18 18"><path d="M4 7h7v8H4zM7 7V3.500h7V12h-3" fill="none" stroke="#ddd"/></svg></div>
<div class="b k" style="left:894px;top:452px;width:17px;height:17px"><svg viewBox="0 0 18 18"><path d="M3 3h4v4H3zM3 11h4v4H3z" fill="none" stroke="#ddd"/><path d="M9 7h6v4H9z" fill="#eee"/><path d="M7 5h2v2M7 13h2v-2" fill="none" stroke="#ddd"/></svg></div>
<div class="b" style="left:919px;top:452px;width:17px;height:17px"><svg viewBox="0 0 18 18"><use href="#trash"/></svg></div>

<!-- brush size -->
<div class="a" style="left:757px;top:477px;width:267px;height:1px;background:#4a8fb0"></div>
<div class="p r" style="left:757px;top:478px;width:267px;height:15px"><span>Brush Size</span></div>
<svg class="a" style="left:1000px;top:480px" width="24" height="11"><use href="#hd"/></svg>
<div class="a" style="left:757px;top:493px;width:251px;height:37px;background:#4a4a4a"></div>
<div class="a" style="left:757px;top:493px;width:29px;height:37px;background:#5a5a5a"></div>
<div class="a" style="left:788px;top:493px;width:28px;height:37px;background:#5a5a5a"></div>
<div class="a" style="left:818px;top:493px;width:28px;height:37px;background:#5a5a5a"></div>
<div class="a" style="left:848px;top:493px;width:28px;height:37px;background:#5a5a5a"></div>
<div class="a" style="left:878px;top:493px;width:28px;height:37px;background:#5a5a5a"></div>
<div class="a" style="left:908px;top:493px;width:28px;height:37px;background:#5a5a5a"></div>
<div class="a" style="left:938px;top:493px;width:28px;height:37px;background:#5a5a5a"></div>
<div class="a" style="left:968px;top:493px;width:28px;height:37px;background:#5a5a5a"></div>
<svg class="a" style="left:757px;top:493px" width="240" height="37"><circle cx="15" cy="15" r=".6" fill="#777"/><circle cx="45" cy="15" r="1" fill="#888"/><circle cx="75" cy="15" r="1.100" fill="#ccc"/><circle cx="105" cy="15" r="1.400" fill="#ddd"/><circle cx="135" cy="15" r="2" fill="#eee"/><circle cx="165" cy="15" r="2.200" fill="#eee"/><circle cx="195" cy="15" r="3" fill="#f4f4f4"/><circle cx="225" cy="15" r="4.500" fill="#f4f4f4"/></svg>
<div class="t" style="left:770px;top:520px;font-size:9px;color:#ddd">1</div>
<div class="t" style="left:796px;top:520px;font-size:9px;color:#ddd">1.5</div>
<div class="t" style="left:830px;top:520px;font-size:9px;color:#ddd">2</div>
<div class="t" style="left:860px;top:520px;font-size:9px;color:#ddd">3</div>
<div class="t" style="left:890px;top:520px;font-size:9px;color:#ddd">4</div>
<div class="t" style="left:920px;top:520px;font-size:9px;color:#ddd">5</div>
<div class="t" style="left:950px;top:520px;font-size:9px;color:#ddd">7</div>
<div class="t" style="left:978px;top:520px;font-size:9px;color:#ddd">10</div>
<div class="a" style="left:1010px;top:493px;width:13px;height:37px;background:#333"></div>
<div class="a" style="left:1010px;top:502px;width:13px;height:6px;background:#777"></div>
<svg class="a" style="left:1010px;top:494px" width="13" height="36"><path d="M6.500 1l3 4h-6zM6.500 35l3-4h-6z" fill="#bbb"/></svg>

<!-- status -->
<div class="a" style="left:0;top:530px;width:1024px;height:14px;background:#222"></div>
<div class="a" style="left:576px;top:530px;width:35px;height:14px;background:#f2f2f2;border:1px solid #999"></div>
<div class="t" style="left:579px;top:532px;font-size:9.500px;color:#444">Spotify</div>
</body></html>
